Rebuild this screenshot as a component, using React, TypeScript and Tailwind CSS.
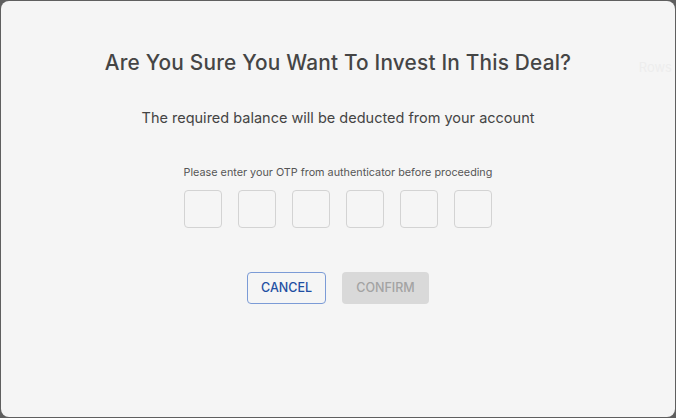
import React from "react";

const font = { fontFamily: "Inter, 'Open Sans', sans-serif" };

export default function App() {
  const boxes = [0, 1, 2, 3, 4, 5];

  return (
    <div className="w-[676px] h-[418px] bg-[#5f5f5f] p-px" style={font}>
      <div className="relative h-[416px] w-[674px] rounded-lg bg-[#f5f5f5] flex flex-col items-center">
        {/* texto del fondo que se transparenta */}
        <span className="absolute right-[3px] top-[58px] text-[13px] leading-[16px] text-[#ededed]">Rows</span>

        <h2 className="mt-[48px] text-[20.8px] leading-[28px] font-medium text-[#454545] tracking-[0.2px]">
          Are You Sure You Want To Invest In This Deal?
        </h2>

        <p className="mt-[31px] text-[14.5px] leading-[20px] text-[#444444]">
          The required balance will be deducted from your account
        </p>

        <p className="mt-[37px] text-[10.8px] leading-[16px] text-[#555555]">
          Please enter your OTP from authenticator before proceeding
        </p>

        <div className="mt-[9px] flex gap-4">
          {boxes.map((i) => (
            <input
              key={i}
              maxLength={1}
              className="h-[38px] w-[38px] rounded border border-[#d3d3d3] bg-transparent text-center outline-none"
            />
          ))}
        </div>

        <div className="mt-[44px] flex gap-4">
          <button className="h-[32px] w-[79px] rounded border border-[#7b9bd6] text-[12.5px] font-medium text-[#1f4fa3]">
            CANCEL
          </button>
          <button
            disabled
            className="h-[32px] w-[87px] rounded bg-[#d9d9d9] text-[12.5px] font-medium text-[#a3a3a3]"
          >
            CONFIRM
          </button>
        </div>
      </div>
    </div>
  );
}
